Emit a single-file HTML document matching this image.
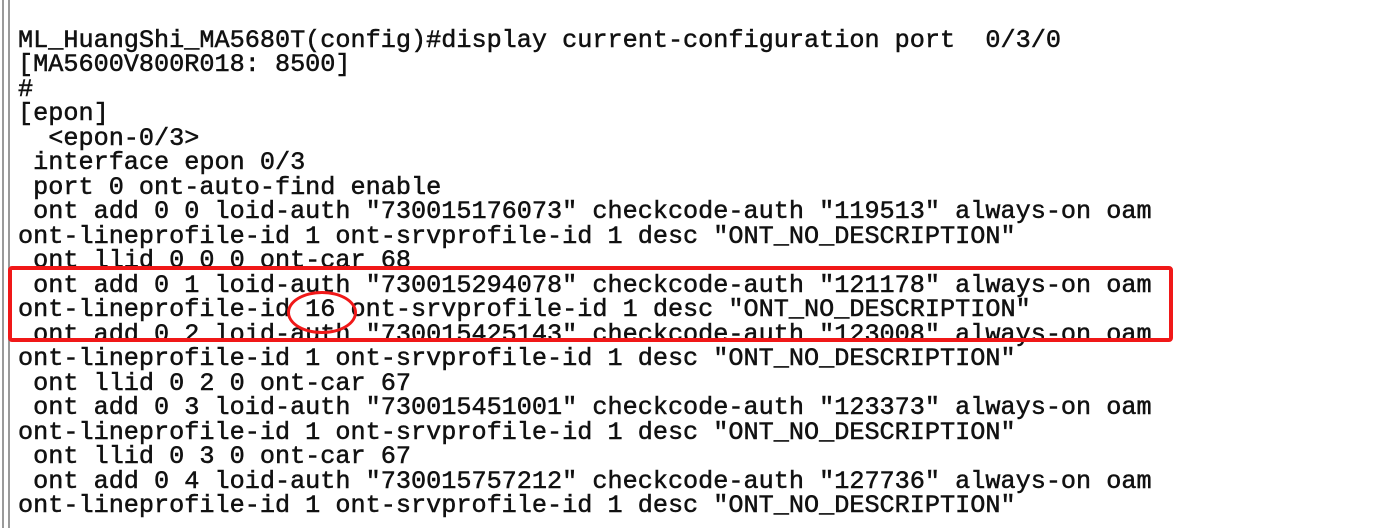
<!DOCTYPE html>
<html><head><meta charset="utf-8"><style>
html,body{margin:0;padding:0;background:#fff;width:1375px;height:528px;overflow:hidden;position:relative}
.b1{position:absolute;left:2px;top:0;width:2px;height:528px;background:#9a9a9a}
.b2{position:absolute;left:8px;top:0;width:2px;height:528px;background:#9a9a9a}
pre{position:absolute;left:18px;top:4px;margin:0;font-family:"Liberation Mono",monospace;font-size:25.2px;line-height:24.5px;color:#111;-webkit-text-stroke:0.5px #111}
.box{position:absolute;left:8px;top:266px;width:1157px;height:68px;border:4px solid #f01818;border-radius:4px}
.ell{position:absolute;left:287px;top:291px;width:64px;height:37px;border:3.5px solid #f01818;border-radius:50%}
</style></head><body>
<div class="b1"></div><div class="b2"></div>
<pre>

ML_HuangShi_MA5680T(config)#display current-configuration port  0/3/0
[MA5600V800R018: 8500]
#
[epon]
  &lt;epon-0/3&gt;
 interface epon 0/3
 port 0 ont-auto-find enable
 ont add 0 0 loid-auth "730015176073" checkcode-auth "119513" always-on oam
ont-lineprofile-id 1 ont-srvprofile-id 1 desc "ONT_NO_DESCRIPTION"
 ont llid 0 0 0 ont-car 68
 ont add 0 1 loid-auth "730015294078" checkcode-auth "121178" always-on oam
ont-lineprofile-id 16 ont-srvprofile-id 1 desc "ONT_NO_DESCRIPTION"
 ont add 0 2 loid-auth "730015425143" checkcode-auth "123008" always-on oam
ont-lineprofile-id 1 ont-srvprofile-id 1 desc "ONT_NO_DESCRIPTION"
 ont llid 0 2 0 ont-car 67
 ont add 0 3 loid-auth "730015451001" checkcode-auth "123373" always-on oam
ont-lineprofile-id 1 ont-srvprofile-id 1 desc "ONT_NO_DESCRIPTION"
 ont llid 0 3 0 ont-car 67
 ont add 0 4 loid-auth "730015757212" checkcode-auth "127736" always-on oam
ont-lineprofile-id 1 ont-srvprofile-id 1 desc "ONT_NO_DESCRIPTION"
</pre>
<div class="box"></div>
<div class="ell"></div>
</body></html>
